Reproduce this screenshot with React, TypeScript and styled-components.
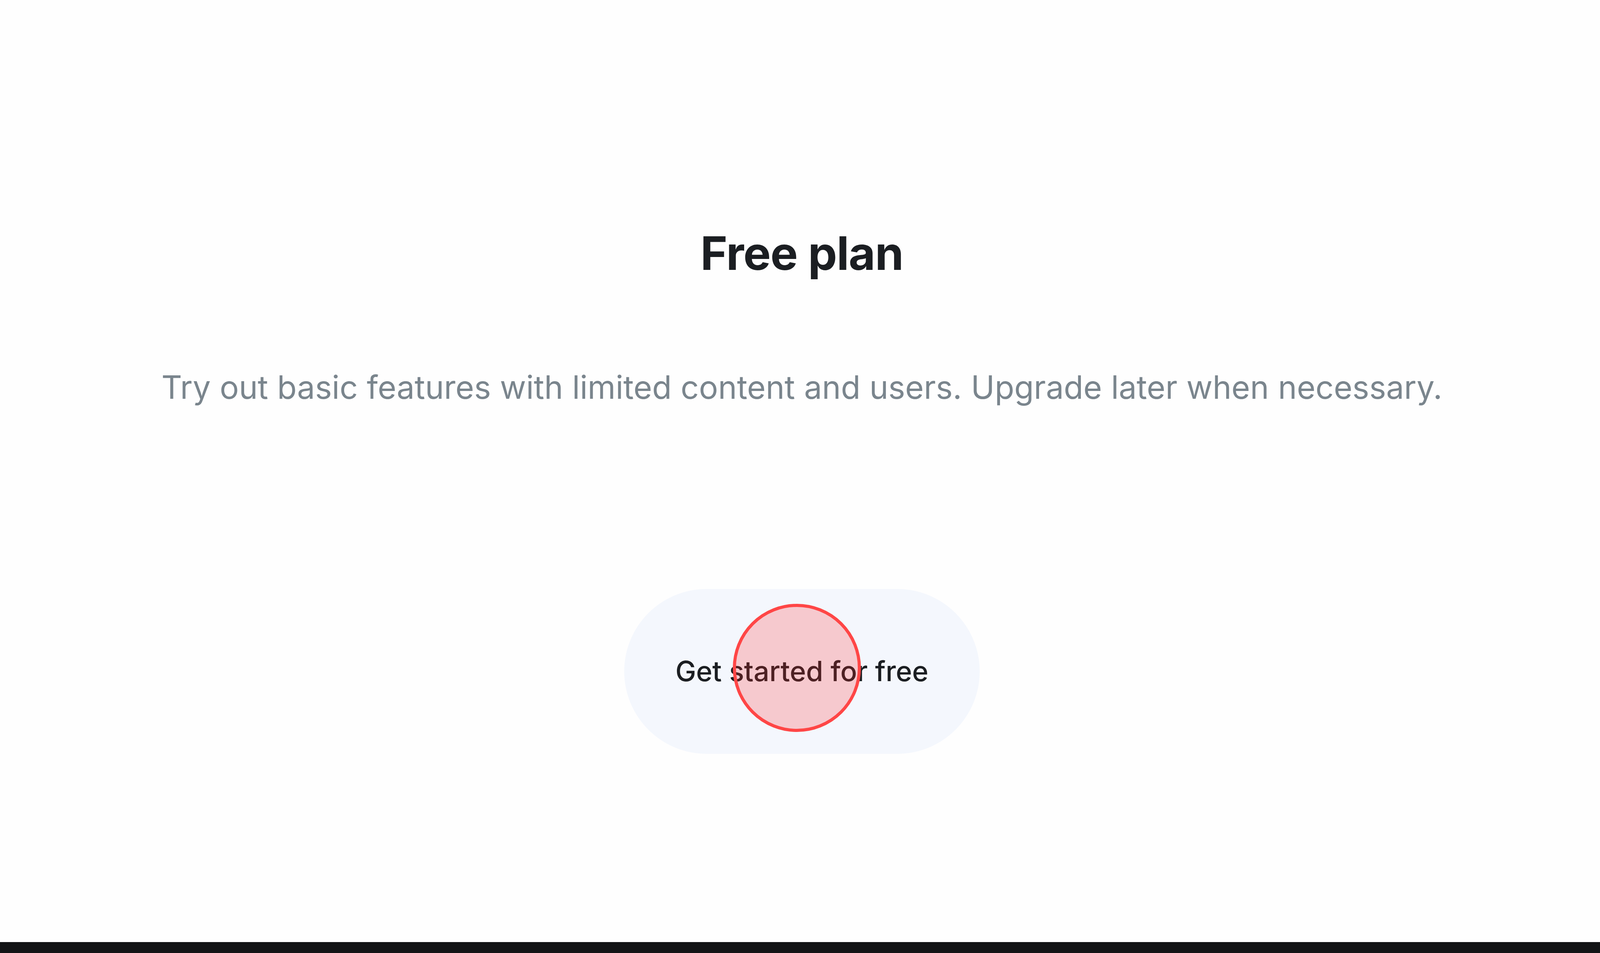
import styled, { createGlobalStyle } from "styled-components";

// The design was measured on a 6408 x 2440 frame; sizes follow the viewport
// so the whole section still fits when the window is narrower.
const W = 6408;
const H = 2440;
const vw = (n: number) => `${((n / W) * 100).toFixed(4)}vw`;
const vh = (n: number) => `${((n / H) * 100).toFixed(4)}vh`;

const GlobalStyle = createGlobalStyle`
  html, body {
    margin: 0;
    padding: 0;
    background: #fefefe;
  }
  body {
    font-family: Inter, "Noto Sans", sans-serif;
    overflow: hidden;
  }
`;

export default function App() {
  return (
    <>
      <GlobalStyle />
      <Page>
        <Main>
          <Title>Free plan</Title>
          <Subtitle>
            Try out basic features with limited content and users. Upgrade
            later when necessary.
          </Subtitle>
          <ButtonWrap>
            <CtaButton>Get started for free</CtaButton>
            <TapMarker />
          </ButtonWrap>
        </Main>
        <BottomBar />
      </Page>
    </>
  );
}

const Page = styled.div`
  height: 100vh;
  display: flex;
  flex-direction: column;
  background: #fefefe;
`;

const Main = styled.main`
  flex: 1;
  display: flex;
  flex-direction: column;
  align-items: center;
  padding-top: ${vh(554)};
  padding-left: ${vw(15)};
`;

const Title = styled.h1`
  margin: 0;
  height: ${vh(188)};
  line-height: ${vh(188)};
  font-size: ${vw(185)};
  font-weight: 700;
  letter-spacing: -0.01em;
  color: #1b1e22;
  white-space: nowrap;
`;

const Subtitle = styled.p`
  margin: ${vh(183)} 0 0;
  height: ${vh(133)};
  line-height: ${vh(133)};
  font-size: ${vw(128)};
  font-weight: 400;
  color: #7a858d;
  white-space: nowrap;
`;

const ButtonWrap = styled.div`
  position: relative;
  margin-top: ${vh(450)};
`;

const CtaButton = styled.button`
  display: flex;
  align-items: center;
  justify-content: center;
  width: ${vw(1423)};
  height: ${vh(422)};
  padding: 0;
  border: none;
  border-radius: 9999px;
  background: #f4f7fd;
  color: #1b1e22;
  font-family: Inter, "Noto Sans", sans-serif;
  font-size: ${vw(111)};
  font-weight: 500;
  line-height: 1;
  white-space: nowrap;
  cursor: pointer;
`;

/* touch indicator drawn over the button */
const TapMarker = styled.span`
  position: absolute;
  left: calc(50% - ${vw(257 + 20)});
  top: calc(50% - ${vw(257)} - ${vh(9)});
  width: ${vw(514)};
  height: ${vw(514)};
  box-sizing: border-box;
  border-radius: 50%;
  border: ${vw(14)} solid #ff4646;
  background: rgba(255, 40, 40, 0.22);
  pointer-events: none;
`;

const BottomBar = styled.footer`
  flex: none;
  height: ${vh(28)};
  background: #131416;
`;
